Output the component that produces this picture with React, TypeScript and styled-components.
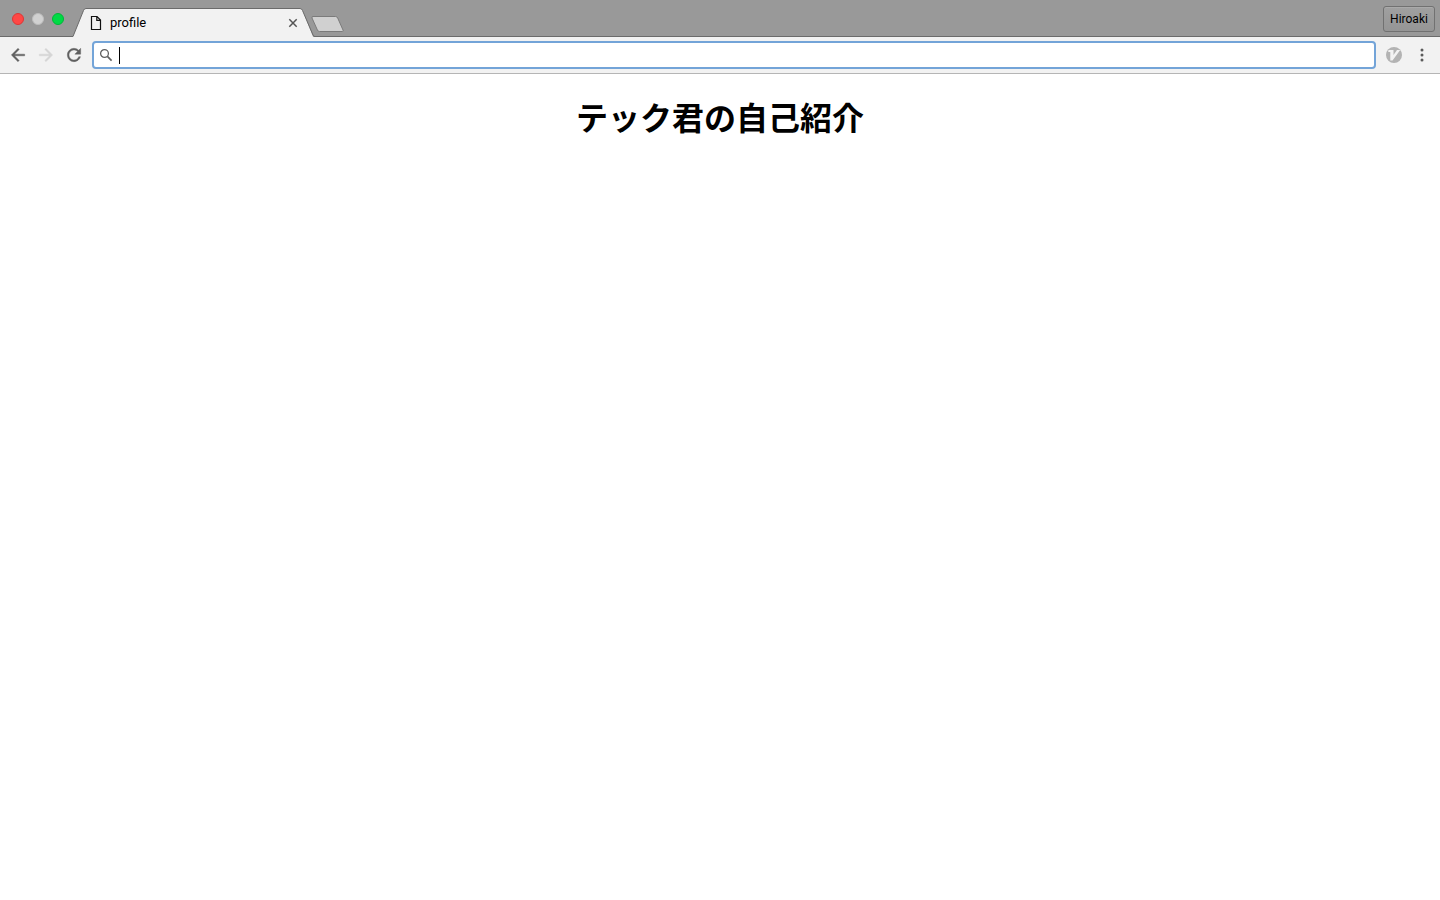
import React from "react";
import styled, { createGlobalStyle } from "styled-components";

const GlobalStyle = createGlobalStyle`
  *, *::before, *::after { box-sizing: border-box; }
  body {
    margin: 0;
    background: #fff;
    color: #000;
    font-family: Roboto, "Noto Sans CJK JP", sans-serif;
  }
  button, input { font: inherit; }
`;

const TabStrip = styled.header`
  display: flex;
  align-items: flex-end;
  height: 37px;
  background: #999;
  box-shadow: inset 0 -1px #6b6b6b;
`;

const WindowControls = styled.div`
  display: flex;
  gap: 8px;
  width: 72px;
  padding: 0 0 12px 12px;
`;

const Light = styled.button<{ $fill: string; $edge: string }>`
  width: 12px;
  height: 12px;
  padding: 0;
  border: 1px solid ${(p) => p.$edge};
  border-radius: 50%;
  background: ${(p) => p.$fill};
`;

const Tab = styled.div`
  position: relative;
  display: flex;
  align-items: center;
  width: 243px;
  height: 29px;
  padding: 0 16px 0 18px;
  font-size: 13px;
  line-height: 16px;
`;

const TabShape = styled.svg`
  position: absolute;
  inset: 0;
`;

const TabContent = styled.div`
  position: relative;
  display: flex;
  flex: 1;
  align-items: center;
`;

const TabTitle = styled.span`
  flex: 1;
  margin-left: 8px;
`;

const PlainButton = styled.button<{ $size: number }>`
  display: flex;
  flex: none;
  align-items: center;
  justify-content: center;
  width: ${(p) => p.$size}px;
  height: ${(p) => p.$size}px;
  padding: 0;
  border: 0;
  background: none;
`;

const NewTab = styled.button`
  display: flex;
  height: 24px;
  margin-left: -5px;
  padding: 0;
  border: 0;
  background: none;
`;

const ProfileButton = styled.button`
  align-self: flex-start;
  width: 52px;
  height: 26px;
  margin: 6px 5px 0 auto;
  padding: 0;
  border: 1px solid #717171;
  border-radius: 3px;
  background: linear-gradient(#a0a0a0, #959595);
  box-shadow: inset 0 1px #aaa;
  color: #000;
  font-size: 12px;
`;

const Toolbar = styled.nav`
  display: flex;
  align-items: center;
  height: 37px;
  padding: 0 4px;
  border-bottom: 1px solid #b5b5b5;
  background: #f2f2f2;
`;

const AddressBar = styled.label`
  display: flex;
  flex: 1;
  align-items: center;
  height: 28px;
  margin: 0 4px;
  padding: 0 4px;
  border: 2px solid #73a4d8;
  border-radius: 4px;
  background: #fff;
`;

const Caret = styled.span`
  width: 1px;
  height: 17px;
  margin-left: 5px;
  background: #000;
`;

const AddressInput = styled.input`
  flex: 1;
  min-width: 0;
  height: 20px;
  padding: 0;
  border: 0;
  outline: 0;
  background: none;
  font-size: 14px;
`;

const Page = styled.main`
  padding: 18px 8px;
`;

const Heading = styled.h1`
  margin: 0;
  font-family: "Noto Sans CJK JP", sans-serif;
  font-size: 32px;
  font-weight: 700;
  line-height: 48px;
  text-align: center;
`;

const lights = [
  { label: "Close window", fill: "#ff4745", edge: "#dc3735" },
  { label: "Minimize window", fill: "#d1d1d1", edge: "#bdbdbd" },
  { label: "Zoom window", fill: "#00da45", edge: "#00b738" },
];

const BACK = "M20 11H7.83l5.59-5.59L12 4l-8 8 8 8 1.41-1.41L7.83 13H20z";
const FORWARD = "M12 4l-1.41 1.41L16.17 11H4v2h12.17l-5.58 5.59L12 20l8-8z";
const RELOAD =
  "M17.65 6.35C16.2 4.9 14.21 4 12 4c-4.42 0-7.99 3.58-7.99 8s3.57 8 7.99 8c3.73 0 6.84-2.55 7.73-6h-2.08c-.82 2.33-3.04 4-5.65 4-3.31 0-6-2.69-6-6s2.69-6 6-6c1.66 0 3.14.69 4.22 1.78L13 11h7V4z";

const Glyph = ({ path, color }: { path: string; color: string }) => (
  <svg width="20" height="20" viewBox="0 0 24 24" fill={color} stroke={color} strokeWidth=".5" aria-hidden="true">
    <path d={path} />
  </svg>
);

export default function App() {
  return (
    <>
      <GlobalStyle />
      <TabStrip>
        <WindowControls>
          {lights.map((l) => (
            <Light key={l.label} aria-label={l.label} $fill={l.fill} $edge={l.edge} />
          ))}
        </WindowControls>
        <Tab>
          <TabShape width="243" height="29" aria-hidden="true">
            <path d="M0 29 1 28.5 11.5 2.5Q12.2.5 14 .5H228Q229.7.5 230.5 2.5L241 28.5 243 29Z" fill="#f2f2f2" />
            <path d="M0 28.5H1L11.5 2.5Q12.2.5 14 .5H228Q229.7.5 230.5 2.5L241 27Q241.5 28.5 243 28.5" fill="none" stroke="#6b6b6b" />
          </TabShape>
          <TabContent>
            <svg width="12" height="16" viewBox="0 0 12 16" fill="none" stroke="#111" strokeWidth="1.2" aria-hidden="true">
              <path d="M1.5 1.5H7L10.5 5V14.500H1.500ZM6.8 1.5V5.3H10.5" />
            </svg>
            <TabTitle>profile</TabTitle>
            <PlainButton $size={12} aria-label="Close tab">
              <svg width="10" height="10" viewBox="0 0 10 10" stroke="#555" strokeWidth="1.5" aria-hidden="true">
                <path d="M1.3 1.3 8.7 8.7M8.7 1.3 1.3 8.7" />
              </svg>
            </PlainButton>
          </TabContent>
        </Tab>
        <NewTab aria-label="New tab">
          <svg width="35" height="20" viewBox="0 0 35 20" aria-hidden="true">
            <path d="M3 3.5H25.5Q27 3.500 27.700 5L33 17Q33.800 18.500 32.500 18.500H9.500Q8 18.500 7.400 17L2 5Q1.500 3.500 3 3.500Z" fill="#d0d0d0" stroke="#7b7b7b" />
          </svg>
        </NewTab>
        <ProfileButton>Hiroaki</ProfileButton>
      </TabStrip>
      <Toolbar>
        <PlainButton $size={28} aria-label="Back">
          <Glyph path={BACK} color="#606060" />
        </PlainButton>
        <PlainButton $size={28} aria-label="Forward">
          <Glyph path={FORWARD} color="#d5d5d5" />
        </PlainButton>
        <PlainButton $size={28} aria-label="Reload">
          <Glyph path={RELOAD} color="#606060" />
        </PlainButton>
        <AddressBar>
          <svg width="16" height="16" viewBox="0 0 16 16" fill="none" stroke="#5f5f5f" aria-hidden="true">
            <circle cx="6.500" cy="6.500" r="3.900" strokeWidth="1.300" />
            <path d="M9.400 9.400 13.600 13.600" strokeWidth="1.700" />
          </svg>
          <Caret />
          <AddressInput type="text" aria-label="Address and search" />
        </AddressBar>
        <PlainButton $size={28} aria-label="Extension">
          <svg width="16" height="16" viewBox="0 0 16 16" aria-hidden="true">
            <circle cx="8" cy="8" r="8" fill="#b3b3b3" />
            <path d="M2.500 3H7.500V8L11 3H14.200L6.500 13.500H4.300V5L2.200 5Z" fill="#f2f2f2" />
          </svg>
        </PlainButton>
        <PlainButton $size={28} aria-label="Menu">
          <svg width="4" height="14" viewBox="0 0 4 14" fill="#5a5a5a" aria-hidden="true">
            <circle cx="2" cy="2" r="1.500" />
            <circle cx="2" cy="7" r="1.500" />
            <circle cx="2" cy="12" r="1.500" />
          </svg>
        </PlainButton>
      </Toolbar>
      <Page>
        <Heading>テック君の自己紹介</Heading>
      </Page>
    </>
  );
}
